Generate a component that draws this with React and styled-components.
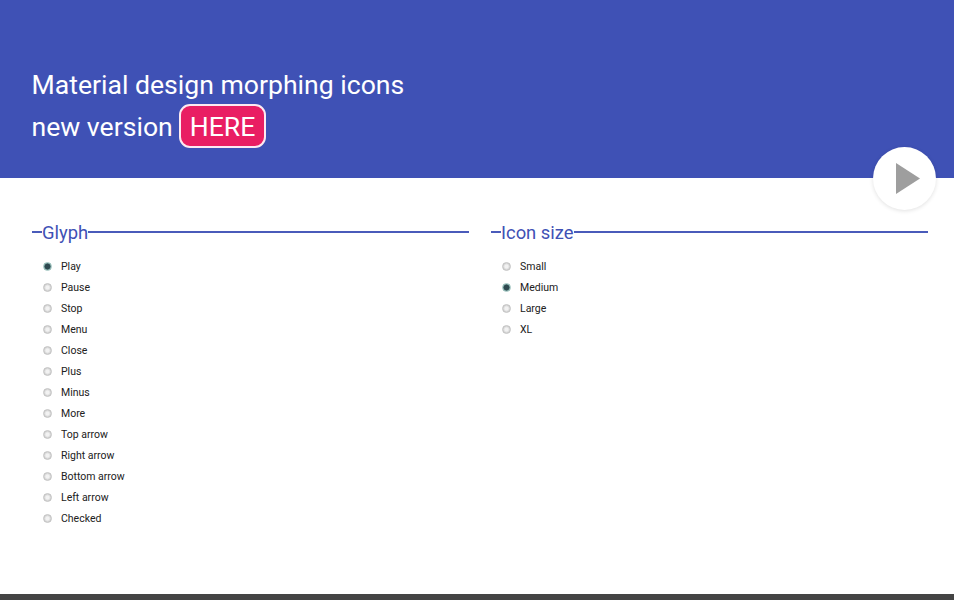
import React from "react";
import styled, { createGlobalStyle } from "styled-components";

const Global = createGlobalStyle`
  html, body { margin: 0; padding: 0; background: #fff; }
  body { font-family: Roboto, "Liberation Sans", sans-serif; overflow: hidden; }
`;

const Page = styled.div`
  height: 600px;
  display: flex;
  flex-direction: column;
`;

const Header = styled.header`
  position: relative;
  height: 178px;
  flex: none;
  box-sizing: border-box;
  background: #3f51b5;
  padding: 64px 32px 0;
`;

const Title = styled.h1`
  margin: 0;
  font-size: 26.6px;
  font-weight: 400;
  line-height: 42px;
  color: #fff;
  margin-left: -0.5px;
`;

const Here = styled.a`
  display: inline-block;
  box-sizing: border-box;
  height: 44px;
  margin-left: 6.5px;
  padding: 0 9px 0 8.5px;
  line-height: 41px;
  color: #fff;
  background: #e91e63;
  border: 2px solid #fdeaf1;
  border-radius: 11px;
  vertical-align: middle;
  position: relative;
  top: -3px;
`;

const Fab = styled.button`
  position: absolute;
  right: 18px;
  top: 147px;
  width: 63px;
  height: 63px;
  padding: 0;
  border: 0;
  border-radius: 50%;
  background: #fff;
  box-shadow: 0 1px 4px rgba(0, 0, 0, 0.12);
  display: flex;
  align-items: center;
  justify-content: center;
`;

const PlayIcon = styled.svg`
  margin-left: 6px;
`;

const Main = styled.main`
  flex: 1;
  display: grid;
  grid-template-columns: 437px 437px;
  column-gap: 22px;
  padding: 44px 0 0 32px;
`;

const Legend = styled.div`
  display: flex;
  align-items: center;
  height: 20px;
  font-size: 18.4px;
  color: #3f51b5;
  &::before {
    content: "";
    width: 10px;
    height: 2px;
    background: #4a5bba;
  }
  &::after {
    content: "";
    flex: 1;
    height: 2px;
    background: #4a5bba;
  }
`;

const Options = styled.div`
  margin-top: 14px;
  padding-left: 11px;
  display: flex;
  flex-direction: column;
`;

const Option = styled.label`
  display: flex;
  align-items: center;
  height: 21px;
  font-size: 10.5px;
  color: #212121;
`;

const Radio = styled.span`
  width: 9px;
  height: 9px;
  margin-right: 9px;
  border-radius: 50%;
  box-sizing: border-box;
  flex: none;
  border: 1px solid ${(p) => (p.$on ? "#9fc4bf" : "#c4c4c4")};
  background: ${(p) => (p.$on ? "radial-gradient(circle, #2f4a50 0 2.5px, #7fa8a6 3.5px)" : "radial-gradient(circle, #f2f2f2 0 1.5px, #cfcfcf 3.5px)")};
`;

const Footer = styled.footer`
  height: 6px;
  flex: none;
  background: #444;
`;

const glyphs = ["Play", "Pause", "Stop", "Menu", "Close", "Plus", "Minus", "More", "Top arrow", "Right arrow", "Bottom arrow", "Left arrow", "Checked"];
const sizes = ["Small", "Medium", "Large", "XL"];

function Group({ title, items, selected }) {
  return (
    <section>
      <Legend>{title}</Legend>
      <Options>
        {items.map((item) => (
          <Option key={item}>
            <Radio $on={item === selected} />
            {item}
          </Option>
        ))}
      </Options>
    </section>
  );
}

export default function App() {
  return (
    <Page>
      <Global />
      <Header>
        <Title>
          Material design morphing icons
          <br />
          new version<Here>HERE</Here>
        </Title>
        <Fab aria-label="Play">
          <PlayIcon width="24" height="31" viewBox="0 0 24 31">
            <path d="M0 0 L24 15.5 L0 31 Z" fill="#9e9e9e" />
          </PlayIcon>
        </Fab>
      </Header>
      <Main>
        <Group title="Glyph" items={glyphs} selected="Play" />
        <Group title="Icon size" items={sizes} selected="Medium" />
      </Main>
      <Footer />
    </Page>
  );
}
